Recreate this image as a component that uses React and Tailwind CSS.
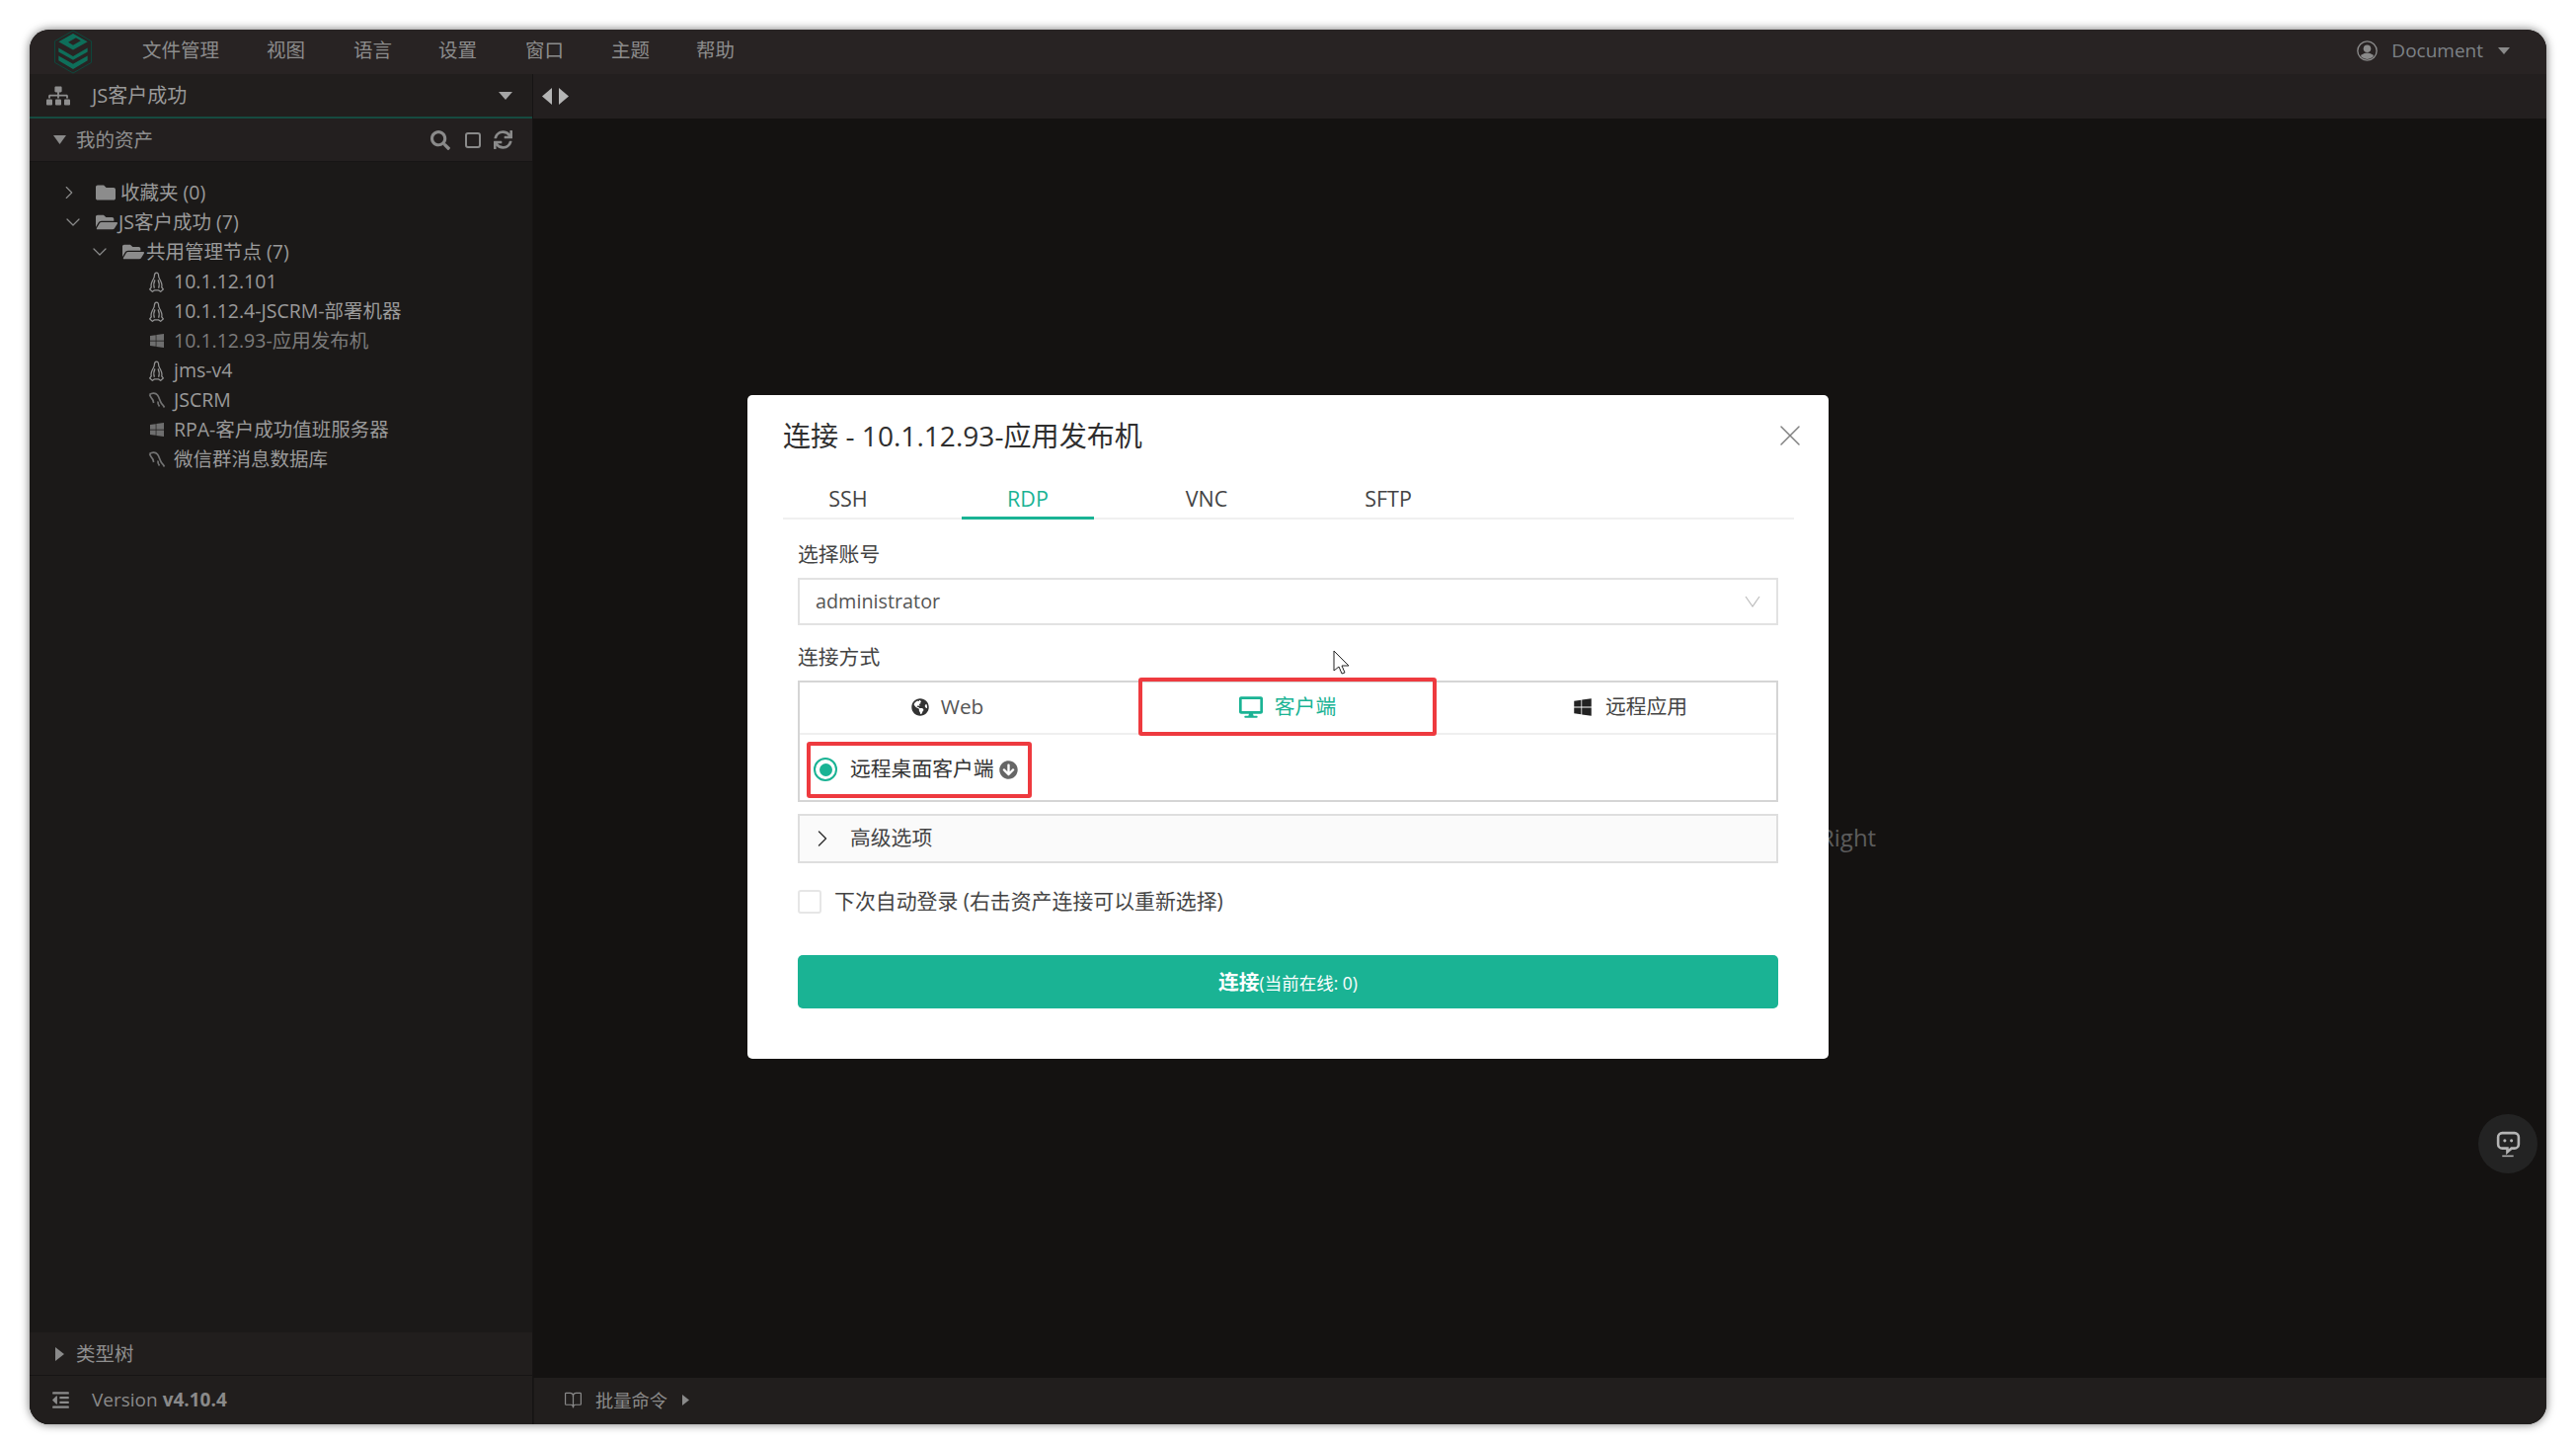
import {
  FaSitemap, FaSearch, FaSync, FaFolder, FaFolderOpen, FaWindows, FaDesktop,
  FaGlobeAmericas, FaArrowCircleDown, FaOutdent,
} from "react-icons/fa";
import { ChevronRight, ChevronDown, X, BookOpen } from "lucide-react";

const menu = [
  ["文件管理", "w-[78px] mr-[48px]"],
  ["视图", "w-[39px] mr-[49px]"],
  ["语言", "w-[39px] mr-[47px]"],
  ["设置", "w-[39px] mr-[49px]"],
  ["窗口", "w-[39px] mr-[48px]"],
  ["主题", "w-[39px] mr-[47px]"],
  ["帮助", "w-[39px]"],
];

const assets = [
  { icon: "linux", name: "10.1.12.101" },
  { icon: "linux", name: "10.1.12.4-JSCRM-部署机器" },
  { icon: "win", name: "10.1.12.93-应用发布机", dim: true },
  { icon: "linux", name: "jms-v4" },
  { icon: "db", name: "JSCRM" },
  { icon: "win", name: "RPA-客户成功值班服务器" },
  { icon: "db", name: "微信群消息数据库" },
];

// small filled triangles used all over the tree and the bars
function Tri({ dir, className }) {
  const pts = { down: "0,0 10,0 5,10", right: "0,0 10,5 0,10", left: "10,0 0,5 10,10" };
  return (
    <svg viewBox="0 0 10 10" preserveAspectRatio="none" className={className}>
      <polygon points={pts[dir]} fill="currentColor" />
    </svg>
  );
}

function Penguin() {
  return (
    <svg viewBox="0 0 16 20" className="w-[17px] h-[21px]" fill="none" stroke="#929292" strokeWidth="1.200">
      <path d="M8 1C6.500 1 6 2.500 6 4 6 6 5 7 4 9c-1 2-1.500 4-1 6l-1.500 2L4 19.300 6 18h4l2 1.300L14.500 17 13 15c.5-2 0-4-1-6-1-2-2-3-2-5 0-1.500-.5-3-2-3Z" />
      <path d="M6.500 8c-1 2-1.500 5-.5 8M9.500 8c1 2 1.500 5 .5 8" />
    </svg>
  );
}

function DbIcon() {
  return (
    <svg viewBox="0 0 18 18" className="w-[18px] h-[18px]" fill="none" stroke="#737373" strokeWidth="1.700">
      <path d="M1.500 3.500C4 1.500 7.500 1.500 9.500 4c1.800 2.300 2.200 5.500 3.800 8 .8 1.300 2 2.400 3.200 4.500" />
      <path d="M1.500 3.500c.8 2.500 2.300 3.700 3.300 5.500.5 1 .6 2 .8 3" />
      <path d="M10 10.500c-.3 1.800.3 3.500 1.500 5" />
    </svg>
  );
}

function AssetIcon({ type }) {
  if (type === "linux") return <Penguin />;
  if (type === "win") return <FaWindows className="w-[16px] h-[16px] text-[#6f6f6f] ml-[1px]" />;
  return <DbIcon />;
}

function Logo() {
  return (
    <svg viewBox="0 0 42 46" className="w-[42px] h-[45px]">
      <path d="M21 1 40 12v22L21 45 2 34V12Z" fill="none" stroke="#0d4a3e" strokeWidth="1" />
      <path d="M21 4 36 12.500 21 21 6 12.500Z" fill="#0e6e5a" />
      <path d="M16 13 24 8.500 29 11.500 21 16Z" fill="#282323" />
      <path d="M6 19 21 27.500 36 19v4L21 31.500 6 23Z" fill="#0e6e5a" />
      <path d="M6 27 21 35.500 36 27v5L21 41 6 32Z" fill="#0e6e5a" />
    </svg>
  );
}

function Avatar() {
  return (
    <svg viewBox="0 0 20 20" className="w-[21px] h-[21px] mr-[14px]">
      <defs>
        <clipPath id="avatar-clip"><circle cx="10" cy="10" r="8" /></clipPath>
      </defs>
      <circle cx="10" cy="10" r="9.200" fill="none" stroke="#8a8a8a" strokeWidth="1.300" />
      <g clipPath="url(#avatar-clip)" fill="#8a8a8a">
        <circle cx="10" cy="7.800" r="3.600" />
        <ellipse cx="10" cy="17" rx="7" ry="5" />
      </g>
    </svg>
  );
}

export default function App() {
  return (
    <div className="w-[2609px] h-[1462px] bg-white p-[30px] pb-[20px] overflow-hidden font-['Open_Sans','Noto_Sans_CJK_SC',sans-serif]">
      <div className="relative w-[2549px] h-[1412px] rounded-[20px] overflow-hidden flex flex-col bg-[#141211] shadow-[0_0_10px_rgba(0,0,0,0.55)]">
        {/* top menu */}
        <div className="h-[45px] shrink-0 bg-[#282323] flex items-center text-[#8c8c8c] text-[19.5px]">
          <div className="w-[114px] pl-[23px] shrink-0"><Logo /></div>
          {menu.map(([label, cls]) => (
            <span key={label} className={`${cls} mb-[4px] whitespace-nowrap`}>{label}</span>
          ))}
          <div className="ml-auto flex items-center pr-[37px] mb-[2px]">
            <Avatar />
            <span className="text-[#7d8287] text-[19px]">Document</span>
            <Tri dir="down" className="w-[12px] h-[7px] text-[#8a8a8a] ml-[15px]" />
          </div>
        </div>

        <div className="flex-1 flex min-h-0">
          {/* sidebar */}
          <aside className="w-[510px] shrink-0 flex flex-col bg-[#1b1918] border-r border-[#161414]">
            <div className="h-[45px] shrink-0 bg-[#211e1d] border-b-2 border-[#164a40] flex items-center text-[#999] text-[20px]">
              <FaSitemap className="w-[24px] h-[20px] text-[#8e8e8e] ml-[17px] mr-[22px]" />
              <span className="flex-1">JS客户成功</span>
              <Tri dir="down" className="w-[14px] h-[8px] text-[#a5a5a5] mr-[20px]" />
            </div>
            <div className="h-[44px] shrink-0 bg-[#231f1f] border-b border-[#171515] flex items-center text-[#8f8f8f] text-[19.5px]">
              <Tri dir="down" className="w-[13px] h-[9px] text-[#8a8a8a] ml-[24px] mr-[10px]" />
              <span className="flex-1">我的资产</span>
              <FaSearch className="w-[20px] h-[20px] text-[#8a8a8a] mr-[15px]" />
              <div className="w-[16px] h-[16px] rounded-[3px] border-2 border-[#8a8a8a] mr-[13px]" />
              <FaSync className="w-[19px] h-[19px] text-[#8a8a8a] mr-[20px]" />
            </div>

            {/* asset tree */}
            <div className="flex-1 pt-[16px] text-[19.5px] text-[#9a9a9a] leading-[30px]">
              <div className="h-[30px] flex items-center">
                <ChevronRight className="w-[22px] h-[22px] text-[#8a8a8a] ml-[29px] mr-[16px]" strokeWidth={1.25} />
                <FaFolder className="w-[20px] h-[20px] text-[#8c8c8c] mr-[5px]" />
                <span>收藏夹 (0)</span>
              </div>
              <div className="h-[30px] flex items-center">
                <ChevronDown className="w-[24px] h-[24px] text-[#8a8a8a] ml-[32px] mr-[11px]" strokeWidth={1.25} />
                <FaFolderOpen className="w-[22px] h-[20px] text-[#8c8c8c] mr-[1px]" />
                <span>JS客户成功 (7)</span>
              </div>
              <div className="h-[30px] flex items-center">
                <ChevronDown className="w-[24px] h-[24px] text-[#8a8a8a] ml-[59px] mr-[11px]" strokeWidth={1.25} />
                <FaFolderOpen className="w-[22px] h-[20px] text-[#8c8c8c] mr-[2px]" />
                <span>共用管理节点 (7)</span>
              </div>
              {assets.map((a) => (
                <div key={a.name} className={`h-[30px] flex items-center pl-[120px] ${a.dim ? "text-[#7b7b7b]" : ""}`}>
                  <div className="w-[26px] shrink-0 flex"><AssetIcon type={a.icon} /></div>
                  <span className="whitespace-nowrap">{a.name}</span>
                </div>
              ))}
            </div>

            <div className="h-[44px] shrink-0 bg-[#211e1d] border-b border-[#161414] flex items-center text-[#8f8f8f] text-[19.5px]">
              <Tri dir="right" className="w-[9px] h-[14px] text-[#8a8a8a] ml-[26px] mr-[12px]" />
              <span>类型树</span>
            </div>
            <div className="h-[49px] shrink-0 bg-[#211e1d] flex items-center text-[#8a8a8a] text-[19px]">
              <FaOutdent className="w-[19px] h-[19px] text-[#8a8a8a] ml-[22px] mr-[22px]" />
              <span>Version <b className="font-bold">v4.10.4</b></span>
            </div>
          </aside>

          {/* main area */}
          <main className="flex-1 flex flex-col min-w-0">
            <div className="h-[45px] shrink-0 bg-[#231f1f] flex items-center pl-[9px]">
              <Tri dir="left" className="w-[10px] h-[17px] text-[#b5b5b5]" />
              <Tri dir="right" className="w-[10px] h-[17px] text-[#b5b5b5] ml-[7px]" />
            </div>
            <div className="flex-1" />
            <div className="h-[47px] shrink-0 pb-[2px] bg-[#211e1d] border-l border-[#191716] flex items-center text-[#8a8a8a] text-[18.3px] pl-[30px]">
              <BookOpen className="w-[19px] h-[19px] mr-[13px]" strokeWidth={1.5} />
              <span>批量命令</span>
              <Tri dir="right" className="w-[7px] h-[11px] ml-[15px]" />
            </div>
          </main>
        </div>

        {/* text behind the dialog */}
        <span className="absolute left-[1813px] top-[803px] text-[24px] leading-[30px] text-[#5c5c5c]">Right</span>

        {/* chat button */}
        <div className="absolute left-[2480px] top-[1098px] w-[60px] h-[60px] rounded-full bg-[#232323] flex items-center justify-center">
          <svg viewBox="0 0 26 26" className="w-[27px] h-[27px]" fill="none" stroke="#b4b4b4" strokeWidth="2.500">
            <path d="M7 2h12a4 4 0 0 1 4 4v7a4 4 0 0 1-4 4h-3l-4 3.500V17H7a4 4 0 0 1-4-4V6a4 4 0 0 1 4-4Z" />
            <circle cx="9.500" cy="9.500" r="1.500" fill="#b4b4b4" stroke="none" />
            <circle cx="16" cy="9.500" r="1.500" fill="#b4b4b4" stroke="none" />
            <path d="M7 24.500h11" strokeWidth="1.400" />
          </svg>
        </div>

        {/* connect dialog */}
        <div className="absolute left-[727px] top-[370px] w-[1095px] h-[672px] bg-white rounded-[5px] text-[#333] flex flex-col px-[36px]">
          <div className="h-[84px] shrink-0 flex items-center justify-between text-[28.1px] text-[#2f2f2f]">
            <span className="pb-[2px] whitespace-nowrap">连接 - 10.1.12.93-应用发布机</span>
            <X className="w-[36px] h-[36px] text-[#808080] mr-[-15px] mb-[2px]" strokeWidth={1} />
          </div>
          <div className="h-[42px] shrink-0 border-b-2 border-[#f0f0f0] flex text-[21.5px] text-[#444] mr-[-1px]">
            <div className="w-[134px] ml-[-1px] mr-[48px] pt-[5px] text-center">SSH</div>
            <div className="w-[134px] mr-[47px] pt-[5px] text-center text-[#1ab394] h-[42px] border-b-[3px] border-[#1ab394]">RDP</div>
            <div className="w-[134px] mr-[50px] pt-[5px] text-center">VNC</div>
            <div className="w-[134px] pt-[5px] text-center">SFTP</div>
          </div>

          <div className="mx-[15px] flex flex-col">
            <div className="h-[59px] flex items-end pb-[9px] text-[20.8px] leading-[30px] text-[#444]">选择账号</div>
            <div className="h-[48px] border-2 border-[#e2e2e2] flex items-center justify-between pl-[16px] pr-[16px] text-[19.8px] text-[#555]">
              <span>administrator</span>
              <svg viewBox="0 0 16 12" className="w-[16px] h-[12px]" fill="none" stroke="#bdbdbd" strokeWidth="1.200">
                <path d="M1 1l7 10 7-10" />
              </svg>
            </div>
            <div className="h-[56px] flex items-end pb-[9px] text-[20.8px] leading-[30px] text-[#444]">连接方式</div>

            <div className="h-[123px] border-2 border-[#d5d5d5] flex flex-col relative">
              <div className="h-[53px] pb-[1px] shrink-0 border-b-2 border-[#efefef] flex text-[20.8px]">
                <div className="w-[343px] pr-[44px] flex items-center justify-center text-[#555]">
                  <FaGlobeAmericas className="w-[18px] h-[18px] text-[#333] mr-[12px]" />
                  <span>Web</span>
                </div>
                <div className="w-[302px] flex items-center justify-center text-[#1ab394] relative">
                  <FaDesktop className="w-[24px] h-[22px] mr-[12px]" />
                  <span>客户端</span>
                  {/* annotation frame */}
                  <div className="absolute inset-x-0 top-[-5px] bottom-[-4px] border-[4px] border-[#ee3a3f] rounded-[3px]" />
                </div>
                <div className="flex-1 pl-[48px] flex items-center justify-center text-[#444]">
                  <FaWindows className="w-[20px] h-[20px] text-[#222] mr-[13px]" />
                  <span>远程应用</span>
                </div>
              </div>
              <div className="flex-1 pt-[4px] flex items-center pl-[7px]">
                <div className="relative flex items-center h-[57px] w-[228px] pl-[7px] text-[20.8px] text-[#333]">
                  <div className="w-[24px] h-[24px] rounded-full border-2 border-[#1ab394] flex items-center justify-center mr-[13px] shrink-0">
                    <div className="w-[13px] h-[13px] rounded-full bg-[#1ab394]" />
                  </div>
                  <span className="whitespace-nowrap">远程桌面客户端</span>
                  <FaArrowCircleDown className="w-[19px] h-[19px] text-[#666] ml-[5px] shrink-0" />
                  <div className="absolute inset-0 border-[4px] border-[#ee3a3f] rounded-[3px]" />
                </div>
              </div>
            </div>

            <div className="mt-[12px] h-[50px] bg-[#fafafa] border-2 border-[#dedede] flex items-center text-[20.8px] text-[#444]">
              <ChevronRight className="w-[28px] h-[28px] text-[#333] ml-[9px] mr-[14px]" strokeWidth={1.25} />
              <span>高级选项</span>
            </div>

            <div className="mt-[27px] h-[24px] flex items-center text-[20.9px] text-[#444]">
              <div className="w-[24px] h-[24px] rounded-[3px] border-2 border-[#e6e6e6] mr-[13px] shrink-0" />
              <span className="whitespace-nowrap">下次自动登录 (右击资产连接可以重新选择)</span>
            </div>

            <div className="mt-[42px] h-[54px] pt-[2px] rounded-[5px] bg-[#1ab394] text-white flex items-center justify-center">
              <b className="text-[20.8px] font-semibold">连接</b>
              <span className="text-[17.5px]">(当前在线: 0)</span>
            </div>
          </div>
        </div>

        {/* mouse pointer from the recording */}
        <svg viewBox="0 0 18 26" className="absolute left-[1320px] top-[628px] w-[18px] h-[26px]">
          <path d="M1 1v20l5-4 3 7 3-1-3-7h7Z" fill="#fff" stroke="#222" strokeWidth="1" />
        </svg>
      </div>
    </div>
  );
}
